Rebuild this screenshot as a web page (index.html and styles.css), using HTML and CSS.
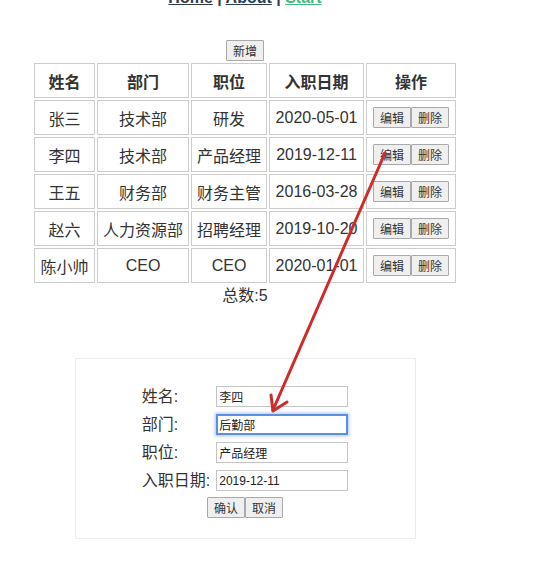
FILE: index.html
```html
<!DOCTYPE html>
<html lang="zh-CN">
<head>
    <meta charset="UTF-8">
    <meta name="viewport" content="width=device-width, initial-scale=1.0">
    <title>员工管理</title>
    <link rel="stylesheet" href="styles.css">
</head>
<body>
    <div class="app">
        <div class="nav">
            <a href="#">Home</a> | <a href="#">About</a> | <a class="active" href="#">Start</a>
        </div>

        <div class="toolbar">
            <button class="btn">新增</button>
        </div>

        <table class="staff">
            <thead>
                <tr>
                    <th class="col-name">姓名</th>
                    <th class="col-dept">部门</th>
                    <th class="col-job">职位</th>
                    <th class="col-date">入职日期</th>
                    <th class="col-ops">操作</th>
                </tr>
            </thead>
            <tbody>
                <tr>
                    <td>张三</td><td>技术部</td><td>研发</td><td>2020-05-01</td>
                    <td><div class="ops"><button class="btn">编辑</button><button class="btn">删除</button></div></td>
                </tr>
                <tr>
                    <td>李四</td><td>技术部</td><td>产品经理</td><td>2019-12-11</td>
                    <td><div class="ops"><button class="btn">编辑</button><button class="btn">删除</button></div></td>
                </tr>
                <tr>
                    <td>王五</td><td>财务部</td><td>财务主管</td><td>2016-03-28</td>
                    <td><div class="ops"><button class="btn">编辑</button><button class="btn">删除</button></div></td>
                </tr>
                <tr>
                    <td>赵六</td><td>人力资源部</td><td>招聘经理</td><td>2019-10-20</td>
                    <td><div class="ops"><button class="btn">编辑</button><button class="btn">删除</button></div></td>
                </tr>
                <tr>
                    <td>陈小帅</td><td>CEO</td><td>CEO</td><td>2020-01-01</td>
                    <td><div class="ops"><button class="btn">编辑</button><button class="btn">删除</button></div></td>
                </tr>
            </tbody>
        </table>
        <p class="total">总数:5</p>

        <div class="edit-box">
            <form class="edit-form">
                <label>姓名:</label>
                <input type="text" value="李四">
                <label>部门:</label>
                <input type="text" class="is-focused" value="后勤部">
                <label>职位:</label>
                <input type="text" value="产品经理">
                <label>入职日期:</label>
                <input type="text" value="2019-12-11">
                <div class="form-actions">
                    <button type="button" class="btn">确认</button><button type="button" class="btn">取消</button>
                </div>
            </form>
        </div>
    </div>

    <!-- annotation arrow drawn over the screenshot -->
    <svg class="arrow" width="545" height="561" viewBox="0 0 545 561">
        <path d="M385 153 Q330 280 273 410" fill="none" stroke="#d02b2b" stroke-width="3" stroke-linecap="round"/>
        <path d="M271 395 L273 411 L287 402" fill="none" stroke="#d02b2b" stroke-width="3" stroke-linecap="round" stroke-linejoin="round"/>
    </svg>
</body>
</html>
```

FILE: styles.css
```css
body {
    margin: 0;
    font-family: "Liberation Sans", "Noto Sans CJK SC", sans-serif;
    color: #333;
    background: #fff;
}
.app {
    width: 490px;
    text-align: center;
}
.nav {
    margin-top: -11px;
    line-height: 18px;
    font-size: 16px;
    font-weight: bold;
    color: #2c3e50;
}
.nav a {
    color: #2c3e50;
}
.nav a.active {
    color: #42b983;
}
.toolbar {
    margin-top: 33px;
    height: 21px;
}
.btn {
    height: 21px;
    padding: 0 6px;
    font-family: "Liberation Sans", "Noto Sans CJK SC", sans-serif;
    font-size: 12px;
    color: #333;
    background: #efefef;
    border: 1px solid #a9a9a9;
    border-radius: 1px;
    cursor: pointer;
}
.staff {
    margin: 0 auto;
    border-spacing: 2px;
    font-size: 16px;
}
.staff th,
.staff td {
    box-sizing: border-box;
    height: 35px;
    padding: 0 4px;
    border: 1px solid #ccc;
    white-space: nowrap;
}
.staff th {
    font-weight: bold;
    color: #333;
}
.col-name { width: 61px; }
.col-dept { width: 92px; }
.col-job { width: 76px; }
.col-date { width: 95px; }
.col-ops { width: 90px; }
.ops {
    display: flex;
    justify-content: center;
}
.total {
    margin: 0;
    line-height: 21px;
    font-size: 16px;
}
.edit-box {
    box-sizing: border-box;
    width: 341px;
    height: 181px;
    margin: 52px auto 0;
    padding-top: 27px;
    border: 1px solid #ececec;
}
.edit-form {
    display: grid;
    grid-template-columns: auto 132px;
    justify-content: center;
    column-gap: 6px;
    row-gap: 7px;
    align-items: center;
}
.edit-form label {
    text-align: left;
    font-size: 16px;
    line-height: 21px;
    color: #333;
}
.edit-form input {
    box-sizing: border-box;
    width: 132px;
    height: 21px;
    padding: 0 2px;
    font-family: "Liberation Sans", "Noto Sans CJK SC", sans-serif;
    font-size: 12px;
    color: #222;
    border: 1px solid #c4c4c4;
    outline: none;
}
.edit-form input.is-focused {
    border: 2px solid #5b8fe0;
    box-shadow: 0 0 3px 1px rgba(90, 140, 230, 0.5);
    padding: 0 1px;
}
.form-actions {
    grid-column: 1 / -1;
    display: flex;
    justify-content: center;
    margin-top: -1px;
}
.arrow {
    position: absolute;
    top: 0;
    left: 0;
    pointer-events: none;
}
```
